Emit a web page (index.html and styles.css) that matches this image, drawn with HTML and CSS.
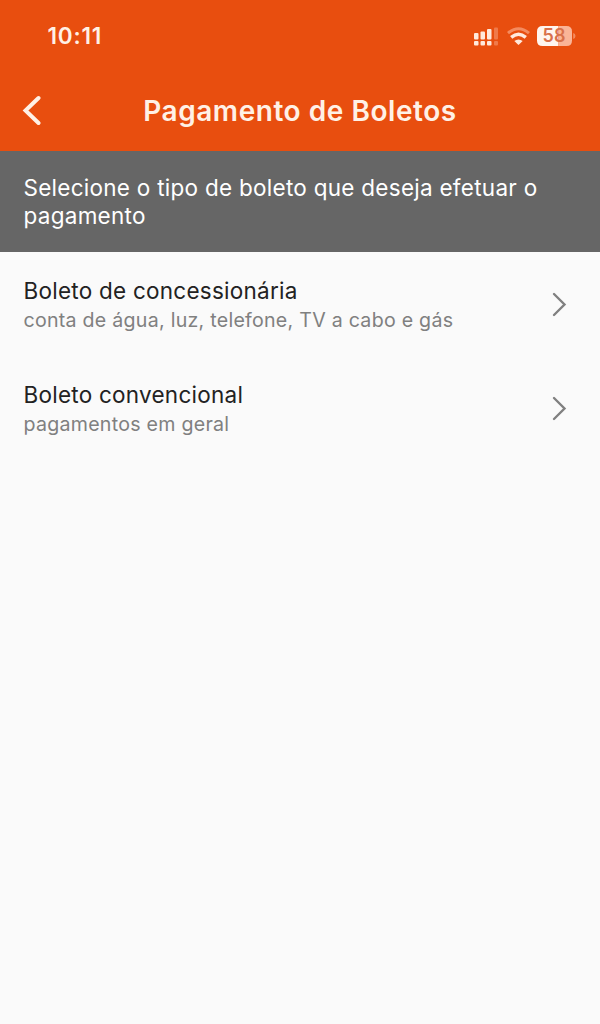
FILE: index.html
```html
<!DOCTYPE html>
<html lang="pt-BR">
<head>
<meta charset="utf-8">
<title>Pagamento de Boletos</title>
<link rel="stylesheet" href="styles.css">
</head>
<body>
<header class="header">
  <div class="status">
    <span class="time">10:11</span>
    <svg class="status-icons" width="104" height="24" viewBox="472 24 104 24">
      <g fill="#ffe9dc">
        <rect x="474" y="33" width="4.5" height="6.5" rx="1"/><rect x="480.5" y="31.5" width="4.5" height="8" rx="1"/><rect x="487" y="29" width="4.5" height="10.5" rx="1"/>
        <rect x="474" y="41" width="4.5" height="4.5" rx="1"/><rect x="480.5" y="41" width="4.5" height="4.5" rx="1"/><rect x="487" y="41" width="4.5" height="4.5" rx="1"/>
      </g>
      <g fill="#f07a4a"><rect x="494" y="27.5" width="4" height="12" rx="1"/><rect x="494" y="41" width="4" height="4.5" rx="1"/></g>
      <g fill="none" stroke-width="3">
        <path d="M508 33.2Q518.500 24.200 529 33.200" stroke="#f48b5f"/>
        <path d="M511.200 37.400Q518.500 31 525.800 37.400" stroke="#ffe9dc" stroke-width="3.400"/>
      </g>
      <path d="M514.300 41Q518.500 37.800 522.700 41L518.500 45Z" fill="#ffe9dc"/>
      <path d="M542.500 26H558.500V46H542.500Q537 46 537 40.500V31.500Q537 26 542.500 26Z" fill="#fff5ef"/>
      <path d="M558.500 26H566.500Q572 26 572 31.500V40.500Q572 46 566.500 46H558.500Z" fill="#fab497"/>
      <path d="M573.200 33Q575.500 33.500 575.500 36T573.200 39Z" fill="#f48b5f"/>
      <text class="battery-level" x="554" y="42.200" text-anchor="middle">58</text>
    </svg>
  </div>
  <div class="bar">
    <svg class="back" width="20" height="32" viewBox="0 0 20 32"><path d="M17.500 3L4.500 15.500L17.500 28"/></svg>
    <h1 class="title">Pagamento de Boletos</h1>
  </div>
</header>
<p class="info">Selecione o tipo de boleto que deseja efetuar o pagamento</p>
<main class="list">
  <div class="item">
    <div class="text">
      <div class="name">Boleto de concessionária</div>
      <div class="desc">conta de água, luz, telefone, TV a cabo e gás</div>
    </div>
    <svg class="chevron" width="18" height="28" viewBox="0 0 18 28"><path d="M4 4L14.500 14.500L4 25"/></svg>
  </div>
  <div class="item">
    <div class="text">
      <div class="name">Boleto convencional</div>
      <div class="desc">pagamentos em geral</div>
    </div>
    <svg class="chevron" width="18" height="28" viewBox="0 0 18 28"><path d="M4 4L14.500 14.500L4 25"/></svg>
  </div>
</main>
</body>
</html>
```
FILE: styles.css
```css
* { box-sizing: border-box; }
body {
  margin: 0;
  min-height: 1024px;
  background: #fafafa;
  font-family: Inter, "Liberation Sans", sans-serif;
}
.header { height: 151px; background: #e84e0f; color: #fff1e6; }
.status {
  display: flex;
  justify-content: space-between;
  align-items: center;
  height: 72px;
  padding: 0 24px 0 47.5px;
}
.time { padding-bottom: 1px; font-size: 22.5px; line-height: 26px; font-weight: 600; letter-spacing: 0.8px; }
.battery-level { font-size: 18px; font-weight: 600; fill: #d9704a; }
.bar {
  display: grid;
  grid-template-columns: 20px 1fr 20px;
  align-items: center;
  height: 77px;
  padding: 0 21px;
}
.back { fill: none; stroke: #fff1e6; stroke-width: 4; stroke-linecap: round; }
.title {
  margin: 0;
  font-size: 28px;
  font-weight: 600;
  letter-spacing: 0.55px;
  text-align: center;
  white-space: nowrap;
}
.info {
  height: 101px;
  margin: 0;
  padding: 23px 24px 0 23.5px;
  background: #666;
  color: #fff;
  font-size: 22.5px;
  line-height: 28px;
  letter-spacing: 0.27px;
}
.item {
  display: flex;
  justify-content: space-between;
  align-items: center;
  height: 104px;
  padding: 0 32px 0 23.5px;
  white-space: nowrap;
}
.text { padding-top: 2px; }
.name { color: #222; font-size: 22.5px; line-height: 30px; letter-spacing: 0.25px; }
.desc { color: #808080; font-size: 19.6px; line-height: 28px; letter-spacing: 0.26px; }
.chevron { fill: none; stroke: #808080; stroke-width: 2.4; stroke-linecap: round; }
```
